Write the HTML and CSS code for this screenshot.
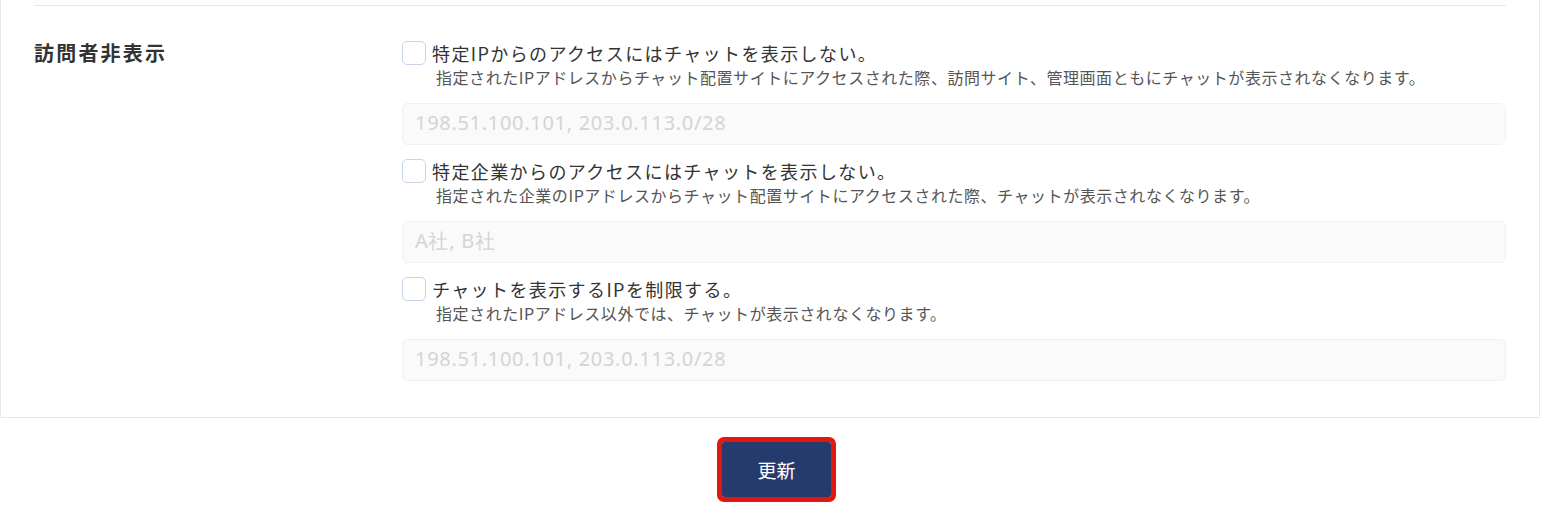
FILE: index.html
```html
<!DOCTYPE html>
<html lang="ja">
  <head>
    <meta charset="UTF-8" />
    <meta name="viewport" content="width=device-width, initial-scale=1.0" />
    <title>訪問者非表示設定</title>
    <link rel="stylesheet" href="styles.css">
  </head>
  <body>
    <!-- 設定カード -->
    <section class="settings-card">
      <div class="setting-row">
        <h3 class="setting-label">訪問者非表示</h3>
        <div class="setting-body">
          <div class="option">
            <label class="check-line">
              <input type="checkbox" class="check-box" />
              <span class="check-text">特定IPからのアクセスにはチャットを表示しない。</span>
            </label>
            <p class="option-note">指定されたIPアドレスからチャット配置サイトにアクセスされた際、訪問サイト、管理画面ともにチャットが表示されなくなります。</p>
            <input type="text" class="text-field" placeholder="198.51.100.101, 203.0.113.0/28" disabled />
          </div>

          <div class="option">
            <label class="check-line">
              <input type="checkbox" class="check-box" />
              <span class="check-text">特定企業からのアクセスにはチャットを表示しない。</span>
            </label>
            <p class="option-note">指定された企業のIPアドレスからチャット配置サイトにアクセスされた際、チャットが表示されなくなります。</p>
            <input type="text" class="text-field" placeholder="A社, B社" disabled />
          </div>

          <div class="option">
            <label class="check-line">
              <input type="checkbox" class="check-box" />
              <span class="check-text">チャットを表示するIPを制限する。</span>
            </label>
            <p class="option-note">指定されたIPアドレス以外では、チャットが表示されなくなります。</p>
            <input type="text" class="text-field" placeholder="198.51.100.101, 203.0.113.0/28" disabled />
          </div>
        </div>
      </div>
    </section>

    <div class="actions">
      <button type="button" class="save-button">更新</button>
    </div>
  </body>
</html>
```

FILE: styles.css
```css
body {
  margin: 0;
  font-family: "Noto Sans CJK JP", "Noto Sans", sans-serif;
  color: #333;
  background: #fff;
}

.settings-card {
  margin-right: 3px;
  padding: 5px 33px 36px;
  border: 1px solid #e2e7f0;
  border-top: none;
}

.setting-row {
  display: flex;
  padding-top: 35px;
  border-top: 1px solid #e4e8f0;
}

.setting-label {
  width: 368px;
  flex-shrink: 0;
  margin: 0;
  font-size: 20px;
  font-weight: bold;
  letter-spacing: 2.2px;
  line-height: 24px;
  color: #333;
}

.setting-body {
  flex: 1;
}

.option + .option {
  margin-top: 14px;
}

.check-line {
  display: flex;
  align-items: center;
  height: 24px;
  cursor: pointer;
}

.check-box {
  appearance: none;
  -webkit-appearance: none;
  width: 24px;
  height: 24px;
  margin: 0 6px 0 0;
  border: 1px solid #c6d3e8;
  border-radius: 5px;
  background: #fff;
  flex-shrink: 0;
}

.check-text {
  font-size: 18px;
  letter-spacing: 1.4px;
  line-height: 24px;
}

.option-note {
  margin: 0;
  padding-left: 34px;
  font-size: 16px;
  letter-spacing: 0.55px;
  line-height: 24px;
  color: #555;
}

.text-field {
  display: block;
  box-sizing: border-box;
  width: 100%;
  height: 42px;
  margin-top: 14px;
  padding: 0 12px 4px;
  border: 1px solid #f0f1f3;
  border-radius: 6px;
  background: #fafafa;
  font-family: "Noto Sans", sans-serif;
  font-size: 20px;
  letter-spacing: 0.7px;
}

.text-field::placeholder {
  color: #d4d4d4;
}

.actions {
  display: flex;
  justify-content: center;
  padding-left: 10px;
  margin-top: 19px;
}

.save-button {
  width: 119px;
  height: 65px;
  border: 5px solid #e2170f;
  border-radius: 7px;
  background: #263b6d;
  background-clip: padding-box;
  color: #fff;
  font-family: "Noto Sans CJK JP", sans-serif;
  font-size: 19px;
  cursor: pointer;
}
```
